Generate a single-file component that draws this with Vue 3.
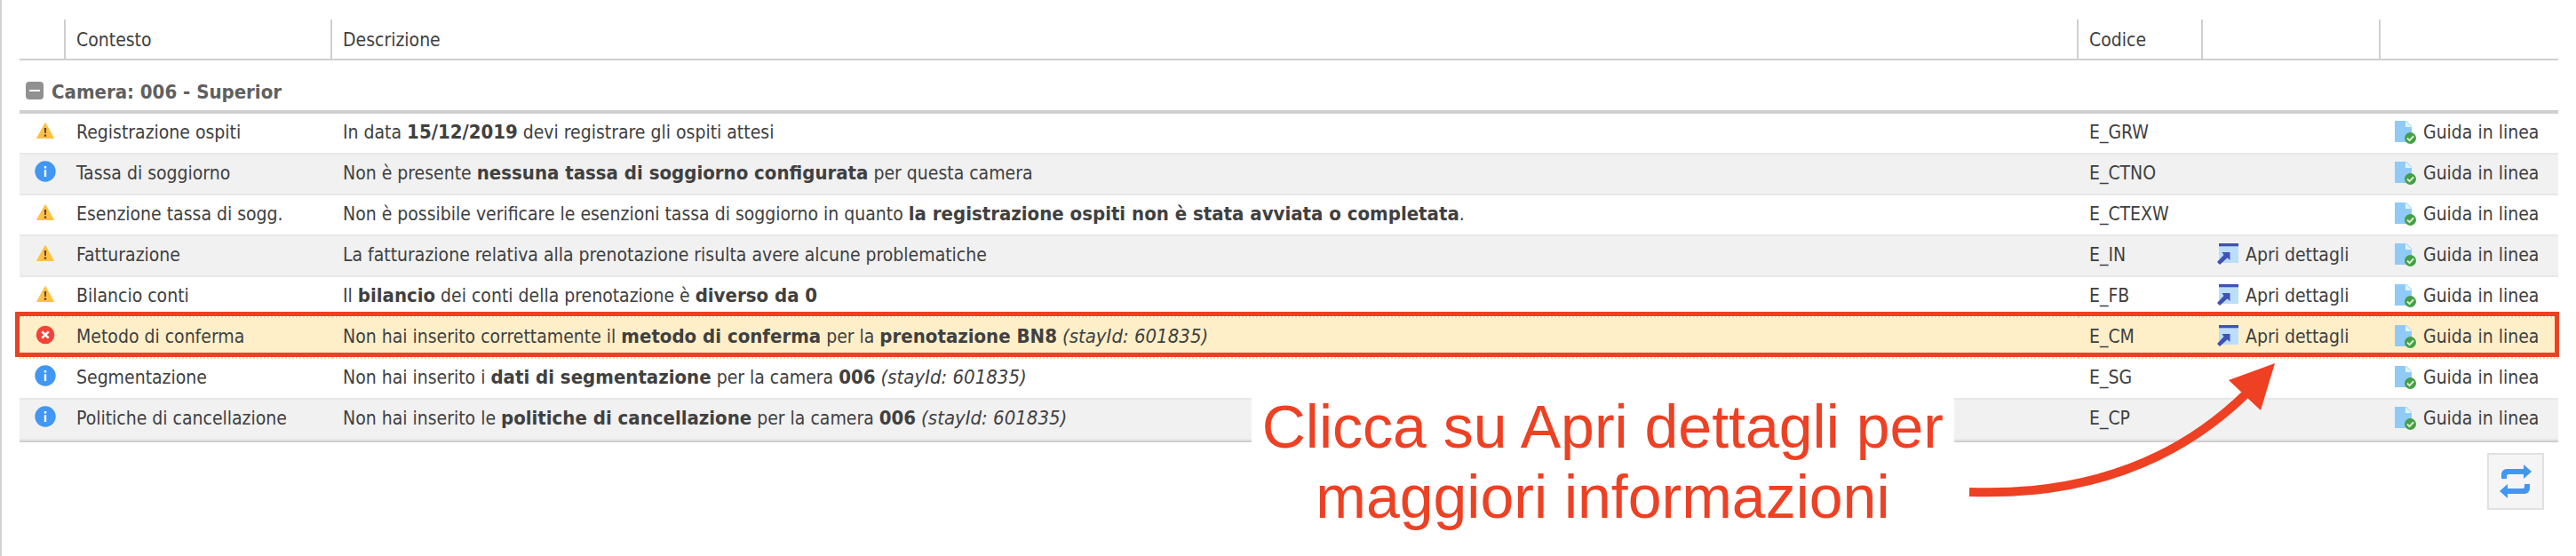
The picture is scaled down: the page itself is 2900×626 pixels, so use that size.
<script setup>
import { ref } from 'vue'

const open = ref(true)

const b = (text) => ({ tag: 'b', text })
const t = (text) => ({ tag: 'span', text })
const i = (text) => ({ tag: 'i', text })

const rows = [
  { level: 'warn', context: 'Registrazione ospiti', code: 'E_GRW', parts: [t('In data '), b('15/12/2019'), t(' devi registrare gli ospiti attesi')] },
  { level: 'info', context: 'Tassa di soggiorno', code: 'E_CTNO', parts: [t('Non è presente '), b('nessuna tassa di soggiorno configurata'), t(' per questa camera')] },
  { level: 'warn', context: 'Esenzione tassa di sogg.', code: 'E_CTEXW', parts: [t('Non è possibile verificare le esenzioni tassa di soggiorno in quanto '), b('la registrazione ospiti non è stata avviata o completata'), t('.')] },
  { level: 'warn', context: 'Fatturazione', code: 'E_IN', details: true, parts: [t('La fatturazione relativa alla prenotazione risulta avere alcune problematiche')] },
  { level: 'warn', context: 'Bilancio conti', code: 'E_FB', details: true, parts: [t('Il '), b('bilancio'), t(' dei conti della prenotazione è '), b('diverso da 0')] },
  { level: 'error', context: 'Metodo di conferma', code: 'E_CM', details: true, active: true, parts: [t('Non hai inserito correttamente il '), b('metodo di conferma'), t(' per la '), b('prenotazione BN8'), t(' '), i('(stayId: 601835)')] },
  { level: 'info', context: 'Segmentazione', code: 'E_SG', parts: [t('Non hai inserito i '), b('dati di segmentazione'), t(' per la camera '), b('006'), t(' '), i('(stayId: 601835)')] },
  { level: 'info', context: 'Politiche di cancellazione', code: 'E_CP', parts: [t('Non hai inserito le '), b('politiche di cancellazione'), t(' per la camera '), b('006'), t(' '), i('(stayId: 601835)')] },
]
</script>

<template>
  <main class="panel">
    <table class="grid">
      <colgroup>
        <col class="c-icon"><col class="c-context"><col><col class="c-code"><col class="c-link"><col class="c-link">
      </colgroup>
      <thead>
        <tr>
          <th></th>
          <th>Contesto</th>
          <th>Descrizione</th>
          <th>Codice</th>
          <th></th>
          <th></th>
        </tr>
      </thead>
      <tbody>
        <tr class="group">
          <td colspan="6">
            <button type="button" class="toggle" :aria-expanded="open" @click="open = !open">
              <svg width="20" height="20" viewBox="0 0 20 20" aria-hidden="true">
                <rect width="20" height="20" rx="4" fill="#919191" />
                <rect x="4" y="9" width="12" height="2" fill="#fff" />
                <rect v-if="!open" x="9" y="4" width="2" height="12" fill="#fff" />
              </svg>
              <span>Camera: 006 - Superior</span>
            </button>
          </td>
        </tr>
        <template v-if="open">
          <tr v-for="row in rows" :key="row.code" class="row" :class="{ active: row.active }">
            <td class="status">
              <svg width="32" height="32" viewBox="0 0 32 32" aria-hidden="true">
                <template v-if="row.level === 'warn'">
                  <path d="M16 7.500 25.500 24.500H6.500Z" fill="#ffc144" stroke="#ffc144" stroke-linejoin="round" />
                  <path d="M14.800 13h2.400l-.4 6h-1.600zM14.800 20.500h2.400v2.200h-2.400z" fill="#5d4037" />
                </template>
                <template v-else-if="row.level === 'info'">
                  <circle cx="16" cy="16" r="11.700" fill="#4197f3" />
                  <path d="M14.800 10h2.400v2.400h-2.400zM14.800 14.300h2.400V22h-2.400z" fill="#fff" />
                </template>
                <template v-else>
                  <circle cx="16" cy="16" r="10.300" fill="#f44336" />
                  <path d="m12.300 12.300 7.400 7.400m0-7.400-7.400 7.400" stroke="#fff" stroke-width="2.600" />
                </template>
              </svg>
            </td>
            <td>{{ row.context }}</td>
            <td class="description"><component :is="p.tag" v-for="(p, n) in row.parts" :key="n">{{ p.text }}</component></td>
            <td>{{ row.code }}</td>
            <td>
              <a v-if="row.details" href="#" class="link">
                <svg width="32" height="32" viewBox="0 0 32 32" aria-hidden="true">
                  <path d="M6 4h22v22H6z" fill="#bbdefb" />
                  <path d="M6 4h22v3.300H6z" fill="#3f51b5" />
                  <path d="M9.500 14H18.500V23l-3-2.700L7 28 4 25l7.500-8z" fill="#3f51b5" />
                </svg>
                <span>Apri dettagli</span>
              </a>
            </td>
            <td>
              <a href="#" class="link">
                <svg width="32" height="32" viewBox="0 0 32 32" aria-hidden="true">
                  <path d="M4 4h13l6 6v18H4z" fill="#90caf9" />
                  <path d="M16 4l7 7h-7z" fill="#e1f5fe" />
                  <circle cx="21.500" cy="23.500" r="6.500" fill="#43a047" />
                  <path d="m18 23.500 2.600 2.600 4.600-4.800" fill="none" stroke="#dcedc8" stroke-width="2" />
                </svg>
                <span>Guida in linea</span>
              </a>
            </td>
          </tr>
        </template>
      </tbody>
    </table>

    <div class="footer">
      <button type="button" class="refresh" aria-label="Aggiorna">
        <svg width="40" height="40" viewBox="0 0 40 40" aria-hidden="true">
          <path d="M4 17v-5a6 6 0 0 1 6-6h19V1l9 8-9 8v-5H12q-2 0-2 2v3zM36 23v5a6 6 0 0 1-6 6H11v5l-9-8 9-8v5h17q2 0 2-2v-3z" fill="#4197f3" />
        </svg>
      </button>
    </div>

    <p class="note">Clicca su Apri dettagli per<br>maggiori informazioni</p>
    <svg class="arrow" width="350" height="160" viewBox="0 0 350 160" aria-hidden="true">
      <path d="M2 149C115 153 225 125 314 38" fill="none" stroke="#ee4023" stroke-width="10" />
      <path d="M346 4 294 23 330 57Z" fill="#ee4023" />
    </svg>
  </main>
</template>

<style>
body {
  margin: 0;
  background: #fff;
}
</style>

<style scoped>
.panel {
  position: relative;
  min-height: 100vh;
  box-sizing: border-box;
  padding: 22px 20px 20px;
  border-left: 2px solid #d3d3d3;
  font: 21px/26px "DejaVu Sans Condensed", "Noto Sans", sans-serif;
  color: #404040;
}
.grid {
  width: 100%;
  table-layout: fixed;
  border-collapse: separate;
  border-spacing: 0;
  border-bottom: 2px solid #cfcfcf;
}
.c-icon { width: 52px; }
.c-context { width: 300px; }
.c-code { width: 140px; }
.c-link { width: 200px; }
th {
  height: 42px;
  padding: 2px 12px 0;
  border-right: 2px solid #cfcfcf;
  border-bottom: 2px solid #cfcfcf;
  text-align: left;
  font-weight: 400;
}
th:last-child { border-right: 0; }
td {
  padding: 0 12px 2px;
  white-space: nowrap;
}
.group td {
  box-sizing: border-box;
  height: 60px;
  padding: 16px 7px 0;
  border-bottom: 4px solid #cfcfcf;
}
.toggle {
  display: flex;
  align-items: center;
  gap: 9px;
  padding: 0;
  border: 0;
  background: none;
  font: inherit;
  font-size: 22px;
  font-weight: 700;
  color: #606060;
}
.toggle svg { margin-bottom: 4px; }
.row td {
  height: 42px;
  border-bottom: 2px solid #e8e8e8;
}
.row:nth-child(odd) td { background: #f1f1f1; }
.row.active td {
  background: #ffefc8;
  background-clip: padding-box;
  border-bottom: 2px dotted #f0dfb0;
}
.row:has(+ .active) td { border-bottom: 2px dotted #f0dfb0; }
.active { position: relative; }
.active .status::after {
  content: "";
  position: absolute;
  inset: -7px -1px 2px -5px;
  border: 5px solid #ee4023;
}
.row .status {
  padding: 0 0 6px 13px;
  height: 38px;
}
svg { display: block; flex: none; }
.description { white-space: pre; }
.description b,
.description i { font-size: 22px; }
.link {
  display: flex;
  align-items: center;
  gap: 4px;
  color: inherit;
  text-decoration: none;
}
.link svg { margin-bottom: 2px; }
.footer {
  display: flex;
  justify-content: flex-end;
  padding: 12px 16px 0;
}
.refresh {
  display: grid;
  place-items: center;
  width: 64px;
  height: 64px;
  padding: 0;
  border: 2px solid #e1e1e1;
  background: #f5f5f5;
}
.note {
  position: absolute;
  top: 441px;
  right: 700px;
  margin: 0;
  padding: 0 12px;
  background: #fff;
  font: 68px/79px "Liberation Sans", Arial, sans-serif;
  text-align: center;
  white-space: nowrap;
  color: #ee4023;
}
.arrow {
  position: absolute;
  top: 405px;
  right: 335px;
}
</style>
